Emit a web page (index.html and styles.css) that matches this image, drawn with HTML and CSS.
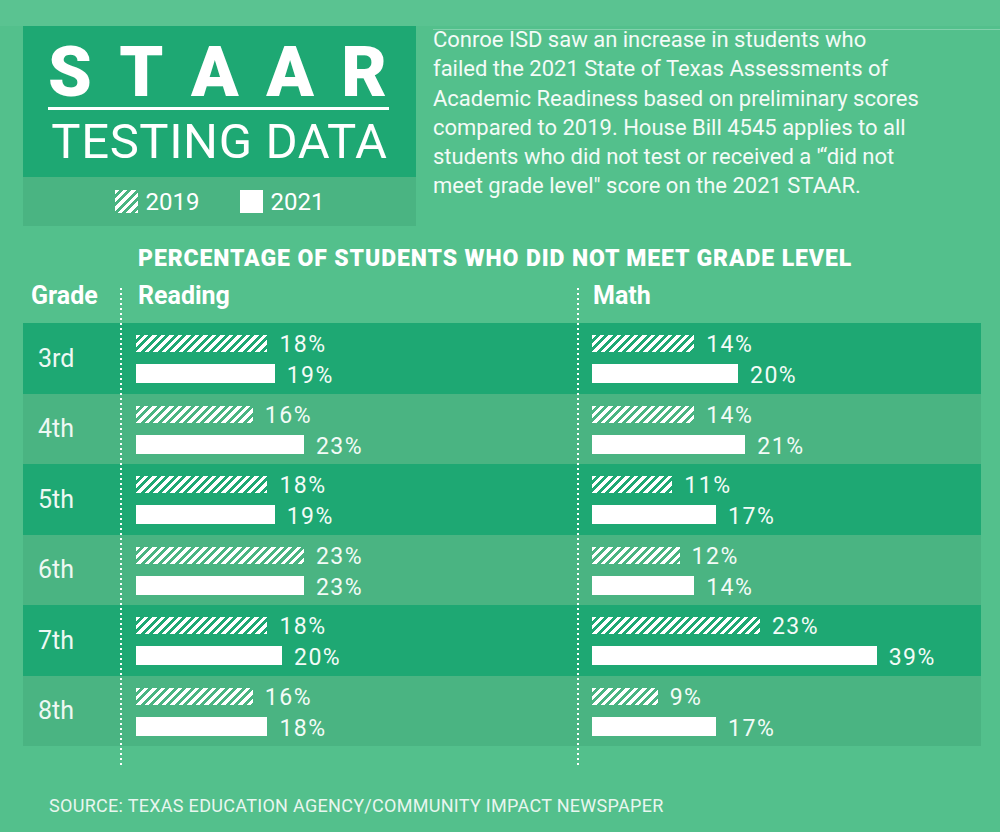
FILE: index.html
```html
<!DOCTYPE html>
<html lang="en">
<head>
<meta charset="utf-8">
<title>STAAR Testing Data</title>
<link rel="stylesheet" href="styles.css">
</head>
<body>
<div class="page">
  <div class="band"></div>
  <div class="main">
    <header class="top">
      <div class="titlebox">
        <div class="title-dark">
          <div class="staar"><span>S</span><span>T</span><span>A</span><span>A</span><span>R</span></div>
          <div class="rule"></div>
          <div class="testing">TESTING DATA</div>
        </div>
        <div class="legend">
          <span class="key"><span class="swatch hatch"></span>2019</span>
          <span class="key"><span class="swatch solid"></span>2021</span>
        </div>
      </div>
      <div class="intro">
        <p>Conroe ISD saw an increase in students who<br>failed the 2021 State of Texas Assessments of<br>Academic Readiness based on preliminary scores<br>compared to 2019. House Bill 4545 applies to all<br>students who did not test or received a '“did not<br>meet grade level" score on the 2021 STAAR.</p>
      </div>
    </header>

    <h2 class="chart-title">PERCENTAGE OF STUDENTS WHO DID NOT MEET GRADE LEVEL</h2>

    <div class="chart">
      <div class="hdr">
        <div class="hcell grade-h">Grade</div>
        <div class="hcell read-h">Reading</div>
        <div class="hcell math-h">Math</div>
      </div>

      <div class="row dark">
        <div class="grade">3rd</div>
        <div class="bars read">
          <div class="line"><span class="bar hatch" style="--v:18"></span><span class="val">18%</span></div>
          <div class="line"><span class="bar solid" style="--v:19"></span><span class="val">19%</span></div>
        </div>
        <div class="bars math">
          <div class="line"><span class="bar hatch" style="--v:14"></span><span class="val">14%</span></div>
          <div class="line"><span class="bar solid" style="--v:20"></span><span class="val">20%</span></div>
        </div>
      </div>

      <div class="row light">
        <div class="grade">4th</div>
        <div class="bars read">
          <div class="line"><span class="bar hatch" style="--v:16"></span><span class="val">16%</span></div>
          <div class="line"><span class="bar solid" style="--v:23"></span><span class="val">23%</span></div>
        </div>
        <div class="bars math">
          <div class="line"><span class="bar hatch" style="--v:14"></span><span class="val">14%</span></div>
          <div class="line"><span class="bar solid" style="--v:21"></span><span class="val">21%</span></div>
        </div>
      </div>

      <div class="row dark">
        <div class="grade">5th</div>
        <div class="bars read">
          <div class="line"><span class="bar hatch" style="--v:18"></span><span class="val">18%</span></div>
          <div class="line"><span class="bar solid" style="--v:19"></span><span class="val">19%</span></div>
        </div>
        <div class="bars math">
          <div class="line"><span class="bar hatch" style="--v:11"></span><span class="val">11%</span></div>
          <div class="line"><span class="bar solid" style="--v:17"></span><span class="val">17%</span></div>
        </div>
      </div>

      <div class="row light">
        <div class="grade">6th</div>
        <div class="bars read">
          <div class="line"><span class="bar hatch" style="--v:23"></span><span class="val">23%</span></div>
          <div class="line"><span class="bar solid" style="--v:23"></span><span class="val">23%</span></div>
        </div>
        <div class="bars math">
          <div class="line"><span class="bar hatch" style="--v:12"></span><span class="val">12%</span></div>
          <div class="line"><span class="bar solid" style="--v:14"></span><span class="val">14%</span></div>
        </div>
      </div>

      <div class="row dark">
        <div class="grade">7th</div>
        <div class="bars read">
          <div class="line"><span class="bar hatch" style="--v:18"></span><span class="val">18%</span></div>
          <div class="line"><span class="bar solid" style="--v:20"></span><span class="val">20%</span></div>
        </div>
        <div class="bars math">
          <div class="line"><span class="bar hatch" style="--v:23"></span><span class="val">23%</span></div>
          <div class="line"><span class="bar solid" style="--v:39"></span><span class="val">39%</span></div>
        </div>
      </div>

      <div class="row light">
        <div class="grade">8th</div>
        <div class="bars read">
          <div class="line"><span class="bar hatch" style="--v:16"></span><span class="val">16%</span></div>
          <div class="line"><span class="bar solid" style="--v:18"></span><span class="val">18%</span></div>
        </div>
        <div class="bars math">
          <div class="line"><span class="bar hatch" style="--v:9"></span><span class="val">9%</span></div>
          <div class="line"><span class="bar solid" style="--v:17"></span><span class="val">17%</span></div>
        </div>
      </div>

      <div class="vline v-read"></div>
      <div class="vline v-math"></div>
    </div>

    <p class="source">SOURCE: TEXAS EDUCATION AGENCY/COMMUNITY IMPACT NEWSPAPER</p>
  </div>
</div>
</body>
</html>
```

FILE: styles.css
```css
* { box-sizing: border-box; }

html, body {
  margin: 0;
  padding: 0;
  background: #53c08c;
}

body {
  font-family: Roboto, "Liberation Sans", sans-serif;
  color: #f3fbf7;
}

.page {
  width: 1000px;
  height: 832px;
  overflow: hidden;
  background: #53c08c;
}

.band {
  height: 26px;
  background: #5ac391;
}

.main {
  padding-left: 23px;
}

/* ---------- top section ---------- */
.top {
  display: flex;
  align-items: flex-start;
}

.titlebox {
  width: 393px;
  flex: none;
}

.title-dark {
  height: 151px;
  background: #1ea873;
  padding-top: 12px;
}

.staar {
  display: flex;
  justify-content: space-between;
  margin: 0 29px 0 25px;
  height: 69px;
  font-size: 70px;
  line-height: 69px;
  font-weight: 900;
  color: #ffffff;
}

.rule {
  height: 3px;
  margin: 0 27px 0 25px;
  background: #ffffff;
}

.testing {
  margin-top: 7px;
  height: 49px;
  font-size: 49px;
  line-height: 49px;
  text-align: center;
  letter-spacing: 0.6px;
  color: #ffffff;
  white-space: nowrap;
}

.legend {
  height: 49px;
  background: #4ab482;
  display: flex;
  align-items: center;
  justify-content: center;
  gap: 40px;
  font-size: 24px;
  color: #ffffff;
}

.key {
  display: flex;
  align-items: center;
  gap: 8px;
}

.swatch {
  display: block;
  width: 23px;
  height: 23px;
}

.hatch {
  background: repeating-linear-gradient(135deg,
    #ffffff 0 3px,
    transparent 3px 6px);
}

.solid {
  background: #ffffff;
}

.intro {
  margin-left: 17px;
  margin-top: 3px;
  border-top: 1px solid rgba(255, 255, 255, 0.28);
  flex: 1;
}

.intro p {
  margin: -5px 0 0 0;
  font-size: 22px;
  line-height: 29.3px;
  color: #f3fbf7;
  white-space: nowrap;
}

/* ---------- chart ---------- */
.chart-title {
  margin: 20px 0 10px 115px;
  font-size: 23px;
  line-height: 26px;
  font-weight: 900;
  letter-spacing: 0.9px;
  color: #ffffff;
  white-space: nowrap;
}

.chart {
  display: grid;
  width: 958px;
  grid-template-columns: 97px 457px 404px;
  grid-template-rows: 41px repeat(6, 70.5px) 21px;
}

.hdr, .row {
  grid-column: 1 / -1;
  display: grid;
  grid-template-columns: 97px 457px 404px;
}

.hdr { grid-row: 1; }
.row:nth-of-type(2) { grid-row: 2; }
.row:nth-of-type(3) { grid-row: 3; }
.row:nth-of-type(4) { grid-row: 4; }
.row:nth-of-type(5) { grid-row: 5; }
.row:nth-of-type(6) { grid-row: 6; }
.row:nth-of-type(7) { grid-row: 7; }

.hcell {
  font-size: 25px;
  line-height: 28px;
  font-weight: 700;
  color: #ffffff;
}

.grade-h { padding-left: 8px; }
.read-h { padding-left: 18px; }
.math-h { padding-left: 16px; }

.row.dark { background: #1ea873; }
.row.light { background: #4ab482; }

.grade {
  display: flex;
  align-items: center;
  padding-left: 15px;
  font-size: 25px;
  color: #eef8f3;
}

.bars {
  padding-top: 12px;
  display: flex;
  flex-direction: column;
  gap: 12px;
}

.bars.read { padding-left: 16px; }
.bars.math { padding-left: 15px; }

.line {
  display: flex;
  align-items: flex-end;
}

.bar {
  display: block;
  width: calc(var(--v) * 7.3px);
}

.bar.hatch { height: 17px; }
.bar.solid { height: 19px; }

.val {
  margin-left: 12px;
  font-size: 23px;
  line-height: 15px;
  letter-spacing: 1.5px;
  color: #f3fbf7;
}

.vline {
  grid-row: 1 / -1;
  justify-self: start;
  width: 2px;
  margin-top: 6px;
  z-index: 1;
  background: repeating-linear-gradient(to bottom,
    #ffffff 0 2px,
    transparent 2px 5px);
}

.v-read { grid-column: 2; }
.v-math { grid-column: 3; }

.source {
  margin: 28px 0 0 26px;
  font-size: 18px;
  line-height: 21px;
  letter-spacing: 0.3px;
  color: #e8f6ef;
  white-space: nowrap;
}
```
